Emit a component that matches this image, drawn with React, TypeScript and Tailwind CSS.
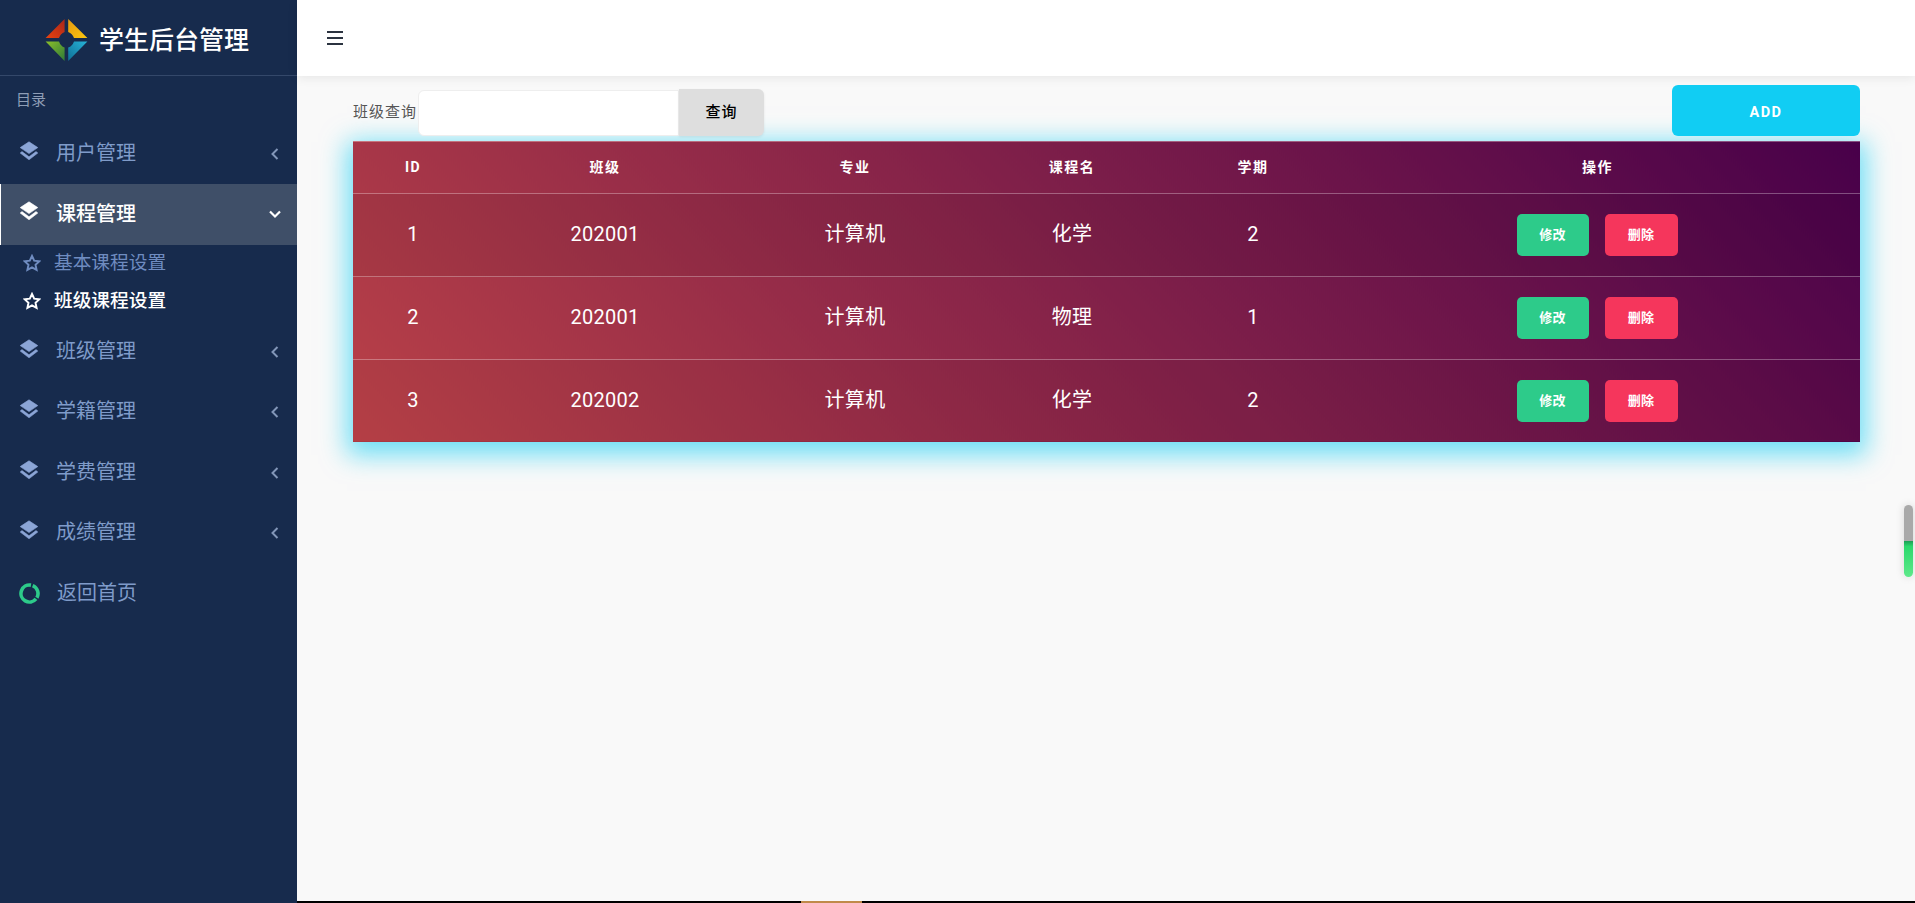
const cjk = "font-['Roboto','Noto_Sans_CJK_SC',sans-serif]";

function Layers() {
  return (
    <svg width="20" height="20" viewBox="0 0 20 20" fill="currentColor" stroke="currentColor" strokeWidth="0.6" strokeLinejoin="round" aria-hidden="true">
      <path d="M10 0.8 L18.8 6.6 L10 12.6 L1.2 6.6 Z" />
      <path d="M3 10.6 L1.2 12 L10 18.8 L18.8 12 L17 10.6 L10 15.8 Z" />
    </svg>
  );
}

function Star() {
  return (
    <svg className="mb-[2px]" width="18" height="18" viewBox="0 0 24 24" fill="none" stroke="currentColor" strokeWidth="2.6" strokeLinejoin="miter" aria-hidden="true">
      <path d="M12 2.6 L14.9 8.9 L21.8 9.7 L16.7 14.4 L18.1 21.2 L12 17.8 L5.9 21.2 L7.3 14.4 L2.2 9.7 L9.1 8.9 Z" />
    </svg>
  );
}

function Logo() {
  return (
    <svg width="43" height="44" viewBox="0 0 43 44" aria-hidden="true">
      <defs>
        <linearGradient id="lgA" x1="0" y1="1" x2="1" y2="0">
          <stop offset="0" stopColor="#e8420f" />
          <stop offset="1" stopColor="#a8261a" />
        </linearGradient>
        <linearGradient id="lgB" x1="0" y1="0" x2="1" y2="1">
          <stop offset="0" stopColor="#e59a10" />
          <stop offset="1" stopColor="#fbc60f" />
        </linearGradient>
        <linearGradient id="lgC" x1="0" y1="0" x2="1" y2="1">
          <stop offset="0" stopColor="#8cc02a" />
          <stop offset="1" stopColor="#2f7a38" />
        </linearGradient>
        <linearGradient id="lgD" x1="0" y1="1" x2="1" y2="0">
          <stop offset="0" stopColor="#0f6f96" />
          <stop offset="1" stopColor="#27b4d8" />
        </linearGradient>
      </defs>
      <path d="M19.6 1 L19.6 14 Q15.6 15.4 14 20 L0.6 20 Z" fill="url(#lgA)" />
      <path d="M23.2 1 L42.4 20 L29 20 Q27.4 15.4 23.2 14 Z" fill="url(#lgB)" />
      <path d="M0.6 23.4 L14 23.4 Q15.6 28 19.6 29.6 L19.6 43 Z" fill="url(#lgC)" />
      <path d="M42.4 23.4 L29 23.4 Q27.4 28 23.2 29.6 L23.2 43 Z" fill="url(#lgD)" />
    </svg>
  );
}

function Item({ label, active }: { label: string; active?: boolean }) {
  return (
    <div
      className={
        active
          ? "h-[60.5px] flex items-center bg-[#3f4f68] border-l border-white text-white pl-[18px] pr-[15px]"
          : "h-[60.5px] flex items-center text-[#7f9bc9] pl-[19px] pr-[15px]"
      }
    >
      <span className={"mb-[6px] " + (active ? "text-white" : "text-[#8ba5d6]")}>
        <Layers />
      </span>
      <span className={"ml-[17px] flex-1 text-[20px] leading-none " + (active ? "font-medium mb-[1px]" : "mb-[2px]")}>{label}</span>
      {active ? (
        <svg width="14" height="14" viewBox="0 0 14 14" fill="none" stroke="currentColor" strokeWidth="2.2" aria-hidden="true">
          <path d="M2 4.5 L7 9.5 L12 4.5" />
        </svg>
      ) : (
        <svg width="14" height="14" viewBox="0 0 14 14" fill="none" stroke="#8296b8" strokeWidth="2" aria-hidden="true">
          <path d="M9.5 2 L4.5 7 L9.5 12" />
        </svg>
      )}
    </div>
  );
}

const rows = [
  { id: 1, c: "202001", m: "计算机", n: "化学", t: 2, cls: "h-[83px] bg-black/5" },
  { id: 2, c: "202001", m: "计算机", n: "物理", t: 1, cls: "h-[83px]" },
  { id: 3, c: "202002", m: "计算机", n: "化学", t: 2, cls: "h-[82px] bg-black/3" },
];

export default function App() {
  return (
    <div className={cjk + " relative flex h-[903px] w-[1915px] overflow-hidden bg-[#f9f9f9]"}>
      <aside className="w-[297px] shrink-0 bg-[#172b4d] text-white">
        <div className="h-[76px] border-b border-[#34486a] flex items-center pl-[45px] gap-[11px] pt-[5px]">
          <Logo />
          <span className="text-[25px] leading-none whitespace-nowrap font-medium">学生后台管理</span>
        </div>
        <div className="h-[47.5px] pl-[16px] pt-[15px] text-[15px] leading-[18px] text-[#8e9db6]">目录</div>
        <Item label="用户管理" />
        <Item label="课程管理" active />
        <div className="pb-[1px] text-[18.7px] leading-none">
          <div className="h-[36px] flex items-center pl-[23px] gap-[13px] text-[#6f8cc0] pt-[2px]">
            <Star />
            <span>基本课程设置</span>
          </div>
          <div className="h-[40px] flex items-center pl-[23px] gap-[13px] text-white font-medium pt-[2px]">
            <Star />
            <span>班级课程设置</span>
          </div>
        </div>
        <Item label="班级管理" />
        <Item label="学籍管理" />
        <Item label="学费管理" />
        <Item label="成绩管理" />
        <div className="h-[60px] flex items-center pl-[19px] text-[#7f9bc9]">
          <svg width="21" height="21" viewBox="0 0 21 21" fill="none" stroke="#2dcb8a" strokeWidth="3.6" aria-hidden="true">
            <path d="M11.98 2.13 A8.5 8.5 0 1 0 17.01 15.96" />
            <path d="M13.68 2.62 A8.5 8.5 0 0 1 17.86 14.75" />
          </svg>
          <span className="ml-[17px] mb-[2px] text-[20px] leading-none">返回首页</span>
        </div>
      </aside>

      <main className="flex-1 min-w-0">
        <header className="h-[76px] bg-white shadow-[0_2px_10px_rgba(0,0,0,0.08)] flex items-center pl-[28px]">
          <svg width="20" height="20" viewBox="0 0 20 20" fill="none" stroke="#2b3340" strokeWidth="1.8" aria-hidden="true">
            <path d="M2 4 H18 M2 10 H18 M2 16 H18" />
          </svg>
        </header>

        <div className="pl-[56px] pr-[55px]">
          <div className="h-[65px] flex items-start justify-between">
            <div className="flex items-start pt-[13px]">
              <span className="w-[65px] h-[47px] flex items-center text-[15px] tracking-[1px] text-[#555] whitespace-nowrap">班级查询</span>
              <div className="mt-[1px] w-[261px] h-[46px] bg-white border border-[#eeeeee] rounded-l-[6px]" />
              <button className="w-[85px] h-[47px] bg-[#dedede] rounded-r-[6px] text-[15px] tracking-[1px] font-medium text-black shadow-[0_1px_3px_rgba(0,0,0,0.08)]">查询</button>
            </div>
            <button className="mt-[9px] w-[188px] h-[51px] pt-[4px] rounded-[6px] bg-[#11cdf3] text-white text-[14.5px] font-bold tracking-[1.5px]">ADD</button>
          </div>

          <table className="w-[1507px] table-fixed border-collapse text-white shadow-[0_7px_24px_6px_rgba(17,205,243,0.6)] bg-[linear-gradient(45deg,#ba4148_0%,#48004a_100%)]">
            <colgroup>
              <col className="w-[120px]" />
              <col className="w-[264px]" />
              <col className="w-[236px]" />
              <col className="w-[198px]" />
              <col className="w-[164px]" />
              <col className="w-[525px]" />
            </colgroup>
            <thead>
              <tr className="h-[52px] border-t border-white/30 text-[14px] font-bold tracking-[1.5px]">
                <th>ID</th>
                <th>班级</th>
                <th>专业</th>
                <th>课程名</th>
                <th>学期</th>
                <th>操作</th>
              </tr>
            </thead>
            <tbody>
              {rows.map((r) => (
                <tr key={r.id} className={"border-t border-white/30 text-[20px] tracking-[0.3px] text-center " + r.cls}>
                  <td className="pb-[2px]">{r.id}</td>
                  <td className="pb-[2px]">{r.c}</td>
                  <td className="pb-[2px]">{r.m}</td>
                  <td className="pb-[2px]">{r.n}</td>
                  <td className="pb-[2px]">{r.t}</td>
                  <td>
                    <div className="flex justify-center gap-[16px] pr-[1px]">
                      <button className="w-[72px] h-[42px] rounded-[5px] bg-[#2dcb8a] text-[13px] font-bold">修改</button>
                      <button className="w-[73px] h-[42px] rounded-[5px] bg-[#f5365c] text-[13px] font-bold">删除</button>
                    </div>
                  </td>
                </tr>
              ))}
            </tbody>
          </table>
        </div>
      </main>

      <div className="absolute left-[1904px] top-[505px] w-[9px] h-[72px] rounded-full overflow-hidden flex flex-col shadow-[0_0_8px_rgba(0,0,0,0.15)]">
        <div className="h-[36px] bg-[#a9a9a9]" />
        <div className="flex-1 bg-[linear-gradient(#1a9e55_0%,#2bd86c_15%,#5ee98a_100%)]" />
      </div>
      <div className="absolute left-[297px] right-0 bottom-0 h-[2px] bg-black" />
      <div className="absolute left-[801px] bottom-0 w-[61px] h-[2px] bg-[#c08a4a]" />
    </div>
  );
}
